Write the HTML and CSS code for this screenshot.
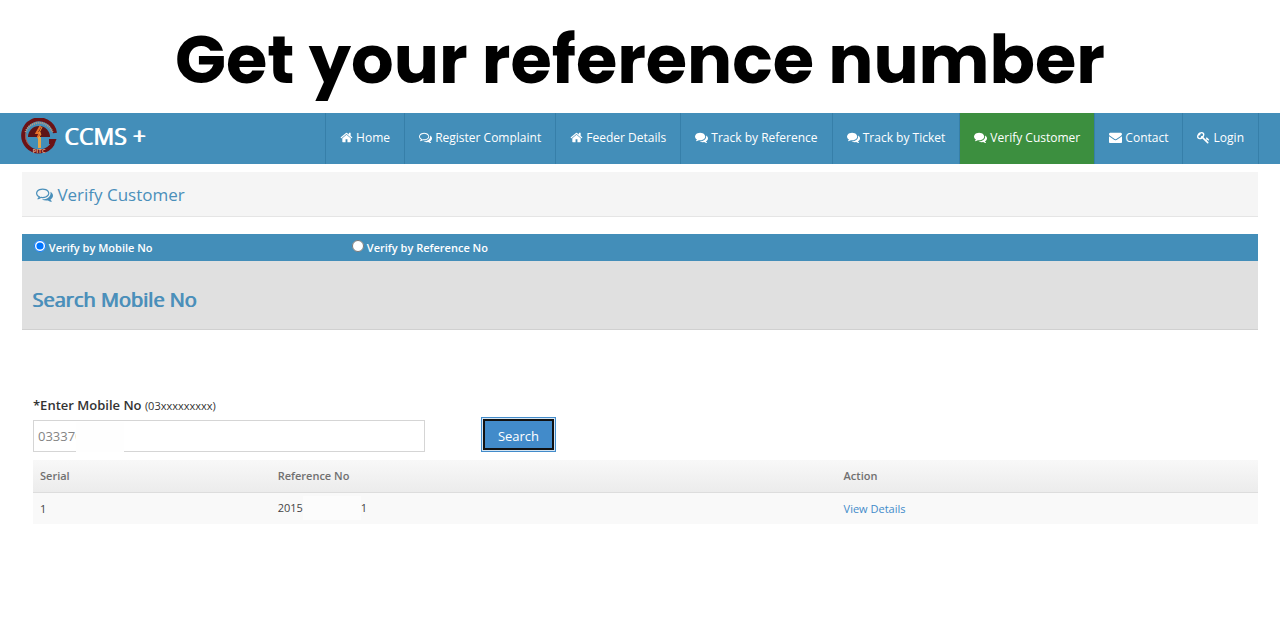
FILE: index.html
```
<!DOCTYPE html>
<html lang="en">
<head>
  <meta charset="UTF-8" />
  <meta name="viewport" content="width=device-width, initial-scale=1.0"/>
  <title>Verify Customer</title>
  <link rel="stylesheet" href="styles.css">
</head>
<body>
  <svg class="sprite" aria-hidden="true">
    <symbol id="home" viewBox="0 0 1664 1792"><path d="M1408 992v480q0 26-19 45t-45 19h-384v-384h-256v384h-384q-26 0-45-19t-19-45v-480q0-1 .5-3t.5-3l575-474 575 474q1 2 1 6zm223-69l-62 74q-8 9-21 11h-3q-13 0-21-7l-692-577-692 577q-12 8-24 7-13-2-21-11l-62-74q-8-10-7-23.500t11-21.500l719-599q32-26 76-26t76 26l244 204v-195q0-14 9-23t23-9h192q14 0 23 9t9 23v408l219 182q10 8 11 21.500t-7 23.500z"/></symbol>
    <symbol id="comments" viewBox="0 0 1792 1792"><path d="M1408 768q0 139-94 257t-256.500 186.500-353.500 68.500q-86 0-176-16-124 88-278 128-36 9-86 16h-3q-11 0-20.500-8t-11.500-21q-1-3-1-6.500t.5-6.500 2-6l2.500-5 3.500-5.500 4-5 4.500-5 4-4.500q5-6 23-25t26-29.500 22.500-29 25-38.500 20.500-44q-124-72-195-177t-71-224q0-139 94-257t256.500-186.500 353.500-68.500 353.500 68.500 256.500 186.500 94 257zm384 256q0 120-71 224.500t-195 176.500q10 24 20.500 44t25 38.500 22.500 29 26 29.500 23 25q1 1 4 4.500t4.500 5 4 5 3.500 5.500l2.500 5 2 6 .5 6.500-1 6.500q-3 14-13 22t-22 7q-50-7-86-16-154-40-278-128-90 16-176 16-271 0-472-132 58 4 88 4 161 0 309-45t264-129q125-92 192-212t67-254q0-77-23-152 129 71 204 178t75 230z"/></symbol>
    <symbol id="comments-o" viewBox="0 0 1792 1792"><path d="M704 384q-153 0-286 52t-211.500 141-78.500 191q0 82 53 158t149 132l97 56-35 84q34-20 62-39l44-31 53 10q78 14 153 14 153 0 286-52t211.500-141 78.500-191-78.500-191-211.500-141-286-52zm0-128q191 0 353.500 68.500t256.500 186.500 94 257-94 257-256.500 186.500-353.500 68.500q-86 0-176-16-124 88-278 128-36 9-86 16h-3q-11 0-20.500-8t-11.500-21q-1-3-1-6.500t.5-6.500 2-6l2.500-5 3.500-5.500 4-5 4.500-5 4-4.500q5-6 23-25t26-29.500 22.500-29 25-38.500 20.500-44q-124-72-195-177t-71-224q0-139 94-257t256.500-186.500 353.500-68.500zm822 1169q10 24 20.500 44t25 38.500 22.500 29 26 29.500 23 25q1 1 4 4.500t4.500 5 4 5 3.500 5.500l2.500 5 2 6 .5 6.500-1 6.500q-3 14-13 22t-22 7q-50-7-86-16-154-40-278-128-90 16-176 16-271 0-472-132 58 4 88 4 161 0 309-45t264-129q125-92 192-212t67-254q0-77-23-152 129 71 204 178t75 230q0 120-71 224.500t-195 176.500z"/></symbol>
    <symbol id="envelope" viewBox="0 0 1792 1792"><path d="M1792 710v794q0 66-47 113t-113 47h-1472q-66 0-113-47t-47-113v-794q44 49 101 87 362 246 497 345 57 42 92.500 65.500t94.500 48 110 24.500h2q51 0 110-24.500t94.500-48 92.500-65.500q170-123 498-345 57-39 100-87zm0-294q0 79-49 151t-122 123q-376 261-468 325-10 7-42.500 30.500t-54 38-52 32.500-57.500 27-50 9h-2q-23 0-50-9t-57.500-27-52-32.500-54-38-42.500-30.500q-91-64-262-182.500t-205-142.500q-62-42-117-115.500t-55-136.500q0-78 41.500-130t118.500-52h1472q65 0 112.500 47t47.500 113z"/></symbol>
    <symbol id="key" viewBox="0 0 1792 1792"><path d="M832 512q0-80-56-136t-136-56-136 56-56 136q0 42 19 83-41-19-83-19-80 0-136 56t-56 136 56 136 136 56 136-56 56-136q0-42-19-83 41 19 83 19 80 0 136-56t56-136zm851 704q0 17-49 66t-66 49q-9 0-28.500-16t-36.500-33-38.500-40-24.500-26l-96 96 220 220q28 28 28 68 0 42-39 81t-81 39q-40 0-68-28l-671-671q-176 131-365 131-163 0-265.500-102.500t-102.500-265.500q0-160 95-313t248-248 313-95q163 0 265.500 102.500t102.500 265.500q0 189-131 365l355 355 96-96q-3-3-26-24.500t-40-38.500-33-36.500-16-28.500q0-17 49-66t66-49q13 0 23 10 6 6 46 44.500t82 79.500 86.500 86 73 78 28.500 41z"/></symbol>
  </svg>

  <h1 class="page-title">Get your reference number</h1>

  <header class="navbar">
    <a href="#" class="brand">
      <svg class="logo" viewBox="0 0 36 36" aria-hidden="true">
        <path d="M32 25.500A16 16 0 1 1 34 15" fill="none" stroke="#6b1216" stroke-width="4"/>
        <path d="M4.500 14A14.500 14.500 0 0 1 31.500 14" fill="none" stroke="#c99a76" stroke-width="2" stroke-dasharray="1 1"/>
        <path d="M5 15A13.500 13.500 0 0 0 8 27" fill="none" stroke="#b0503c" stroke-width="1"/>
        <path d="M7 19A11 11 0 0 1 29 19z" fill="#5e1416"/>
        <path d="M28 21h7.500l-2 5H28z" fill="#6b1216"/>
        <path d="M19.500 8l-4 7h3l-2 5" fill="none" stroke="#e8702a" stroke-width="2"/>
        <path d="M21 9l-3 6 2 1-3 5" fill="none" stroke="#f39b35" stroke-width="1"/>
        <path d="M17 19h3v11h-3z" fill="#e6a84a"/>
        <text class="logo-text" x="18" y="35" text-anchor="middle">PITC</text>
      </svg>
      <span>CCMS +</span>
    </a>
    <nav class="menu">
      <a href="#"><svg class="icon"><use href="#home"/></svg> Home</a>
      <a href="#"><svg class="icon"><use href="#comments-o"/></svg> Register Complaint</a>
      <a href="#"><svg class="icon"><use href="#home"/></svg> Feeder Details</a>
      <a href="#"><svg class="icon"><use href="#comments"/></svg> Track by Reference</a>
      <a href="#"><svg class="icon"><use href="#comments"/></svg> Track by Ticket</a>
      <a href="#" class="active"><svg class="icon"><use href="#comments"/></svg> Verify Customer</a>
      <a href="#"><svg class="icon"><use href="#envelope"/></svg> Contact</a>
      <a href="#"><svg class="icon"><use href="#key"/></svg> Login</a>
    </nav>
  </header>

  <main class="content">
    <h2 class="breadcrumb"><svg class="icon"><use href="#comments-o"/></svg> Verify Customer</h2>

    <div class="verify-options">
      <label><input type="radio" name="verify" value="mobile" checked> Verify by Mobile No</label>
      <label><input type="radio" name="verify" value="reference"> Verify by Reference No</label>
    </div>
    <h3 class="search-title">Search Mobile No</h3>

    <div class="results">
      <form class="search-form">
        <div class="form-group">
          <label for="mobileNo">*Enter Mobile No <small>(03xxxxxxxxx)</small></label>
          <div class="mobile-field">
            <input type="text" id="mobileNo" value="033370">
            <span class="field-mask"></span>
          </div>
        </div>
        <button type="button" class="search-btn">Search</button>
      </form>

      <table class="result-table">
        <thead>
          <tr>
            <th class="col-serial">Serial</th>
            <th class="col-reference">Reference No</th>
            <th>Action</th>
          </tr>
        </thead>
        <tbody>
          <tr>
            <td>1</td>
            <td>2015<span class="hidden-digits"></span>1</td>
            <td><a href="#">View Details</a></td>
          </tr>
        </tbody>
      </table>
    </div>
  </main>
</body>
</html>
```
FILE: styles.css
```
* {
  box-sizing: border-box;
}

body {
  margin: 0;
  font-family: "Open Sans", sans-serif;
  font-size: 12px;
  color: #444;
  background: #fff;
}

a {
  color: #428bca;
  text-decoration: none;
}

.sprite {
  display: none;
}

.icon {
  width: 13px;
  height: 13px;
  fill: currentColor;
  vertical-align: -2px;
}

.page-title {
  margin: 0;
  padding: 18px 0 11px;
  font-family: Poppins, Inter, sans-serif;
  font-size: 67px;
  font-weight: 700;
  line-height: 84px;
  text-align: center;
  color: #000;
}

/* top bar */
.navbar {
  display: flex;
  justify-content: space-between;
  height: 51px;
  padding: 0 21px;
  background: #438eb9;
}

.brand {
  display: flex;
  align-items: center;
  gap: 7px;
  padding-bottom: 5px;
  font-size: 23px;
  font-weight: 400;
  text-shadow: 1px 0 currentColor;
  color: #fff;
}

.logo {
  width: 36px;
  height: 36px;
}

.logo-text {
  font-size: 6px;
  font-weight: 700;
  text-shadow: none;
  fill: #e0a080;
}

.menu {
  display: flex;
  border-right: 1px solid #367fa9;
}

.menu a {
  padding: 0 14px;
  border-left: 1px solid #367fa9;
  line-height: 49px;
  color: #fff;
  white-space: nowrap;
}

.menu .active {
  background: #3c8f3f;
}

/* page body */
.content {
  padding: 8px 22px 0;
}

.breadcrumb {
  margin: 0 0 17px;
  padding: 1px 14px 0;
  border-bottom: 1px solid #e5e5e5;
  background: #f5f5f5;
  font-size: 17px;
  font-weight: 400;
  line-height: 43px;
  color: #4a8fba;
}

.breadcrumb .icon {
  width: 17px;
  height: 17px;
}

.verify-options {
  display: grid;
  grid-template-columns: 318px 1fr;
  padding: 0 12px;
  background: #438eb9;
  font-size: 11px;
  font-weight: 600;
  line-height: 27px;
  color: #fff;
}

.verify-options input {
  width: 12px;
  height: 12px;
  margin: 0;
  vertical-align: 0;
}

.search-title {
  margin: 0;
  padding: 25px 10px 15px;
  border-bottom: 1px solid #d0d0d0;
  background: #e0e0e0;
  font-size: 20px;
  font-weight: 400;
  line-height: 28px;
  text-shadow: 1px 0 currentColor;
  color: #4a8fba;
}

.results {
  padding: 65px 0 0 11px;
}

.search-form {
  display: flex;
  align-items: flex-end;
  gap: 56px;
}

.form-group {
  width: 392px;
}

.form-group label {
  display: block;
  font-size: 13px;
  font-weight: 600;
  line-height: 20px;
  margin-bottom: 4px;
  color: #333;
}

.form-group small {
  font-size: 11px;
  font-weight: 400;
}

.mobile-field {
  position: relative;
}

.mobile-field input {
  display: block;
  width: 100%;
  height: 32px;
  padding: 0 4px 1px;
  border: 1px solid #d5d5d5;
  font-family: inherit;
  font-size: 13px;
  color: #858585;
}

.field-mask {
  position: absolute;
  top: 2px;
  bottom: 0;
  left: 43px;
  width: 48px;
  background: #fefefe;
}

.search-btn {
  width: 75px;
  height: 35px;
  padding: 3px 0 0;
  border: 1px solid #428bca;
  background: #428bca;
  box-shadow: inset 0 0 0 1px #d5e5f2;
  outline: 2px solid #111;
  outline-offset: -4px;
  font-family: inherit;
  font-size: 13px;
  color: #fff;
}

.result-table {
  width: 100%;
  margin-top: 8px;
  border-collapse: collapse;
  table-layout: fixed;
  font-size: 11px;
}

.result-table th,
.result-table td {
  height: 32px;
  padding: 0 7px;
  text-align: left;
}

.result-table th {
  border-bottom: 1px solid #ddd;
  background: linear-gradient(#f8f8f8, #ececec);
  font-weight: 600;
  color: #707070;
}

.result-table td {
  background: #f9f9f9;
}

.col-serial {
  width: 19.4%;
}

.col-reference {
  width: 46.2%;
}

.hidden-digits {
  display: inline-block;
  width: 58px;
  height: 24px;
  background: #fcfcfc;
  vertical-align: -8px;
}
```
